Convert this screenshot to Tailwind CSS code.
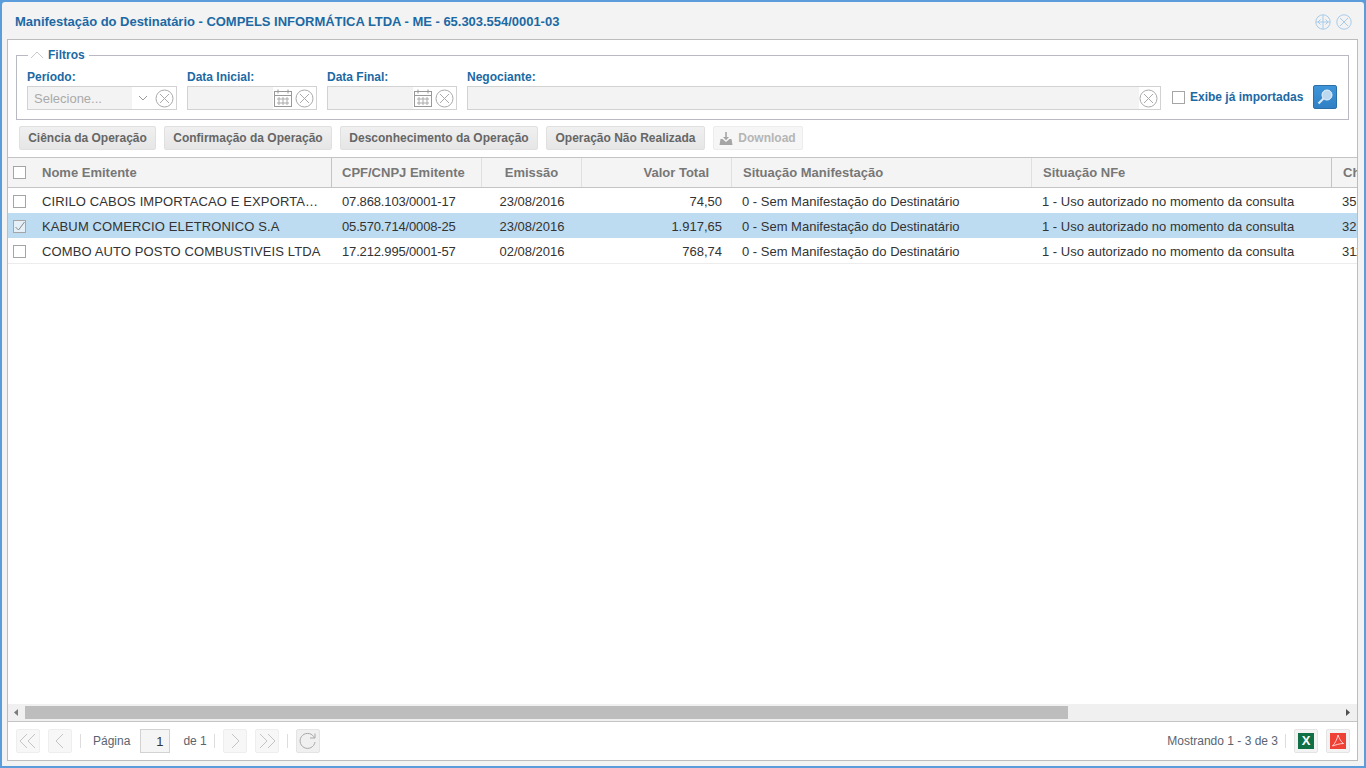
<!DOCTYPE html>
<html lang="pt-BR"><head><meta charset="utf-8"><title>Manifestação do Destinatário</title>
<script src="https://cdn.jsdelivr.net/npm/@tailwindcss/browser@4"></script></head>
<body class="m-0 overflow-hidden bg-[#5b9ddb] font-['Liberation_Sans',Arial,sans-serif]">
<div class="w-[1366px] h-[768px] pt-[2px] pl-[2px] pr-[2px] pb-[2px]">
<div class="h-[764px] bg-[#f3f3f3] rounded-t-[3px] flex flex-col pl-[5px] pr-[6px]">
  <div class="h-[37px] shrink-0 flex items-center justify-between pt-[2px] pl-[8px] pr-[6px]">
    <span class="text-[13px] font-bold text-[#1c69a4] whitespace-nowrap tracking-[-0.025px]">Manifestação do Destinatário - COMPELS INFORMÁTICA LTDA - ME - 65.303.554/0001-03</span>
    <div class="flex gap-[5px] items-center">
      <svg width="16" height="16" viewBox="0 0 16 16" fill="none" stroke="#a9cbe8"><circle cx="8" cy="8" r="7.200"/><path d="M8 1v14M1 8h14M5.500 5.500 3 8l2.500 2.500M10.500 5.500 13 8l-2.500 2.500"/></svg>
      <svg width="16" height="16" viewBox="0 0 16 16" fill="none" stroke="#a9cbe8"><circle cx="8" cy="8" r="7.200"/><path d="m4 4 8 8M12 4l-8 8"/></svg>
    </div>
  </div>
  <div class="h-[722px] bg-white border border-[#bcbcbc] flex flex-col min-h-0">
    <fieldset class="mx-[8px] mt-[8px] h-[72px] shrink-0 border border-[#b9b9c4] px-[10px] pb-0 min-w-0">
      <legend class="ml-[1px] flex items-center gap-[4px] pl-[2px] pr-[4px] h-[14px] text-[12px] font-bold text-[#1c69a4]">
        <svg width="14" height="8" viewBox="0 0 14 8" fill="none" stroke="#c8c8c8"><path d="m1 7 6-6 6 6"/></svg>Filtros
      </legend>
      <div class="flex items-start mt-[8px]">
        <div class="w-[150px] mr-[10px]">
          <div class="h-[16px] text-[12px] font-bold text-[#1c69a4] leading-[14px]">Período:</div>
          <div class="h-[24px] border border-[#d2d2d2] flex items-center bg-white">
            <div class="w-[104px] h-full bg-[#f3f3f3] text-[13px] text-[#aaaaaa] pl-[6px] leading-[23px]">Selecione...</div>
            <svg class="ml-[6px]" width="10" height="6" viewBox="0 0 10 6" fill="none" stroke="#999"><path d="m1 1 4 4 4-4"/></svg>
            <svg class="ml-[7px]" width="19" height="19" viewBox="0 0 19 19" fill="none" stroke="#aaa"><circle cx="9.500" cy="9.500" r="8.500"/><path d="m5 5 9 9M14 5l-9 9"/></svg>
          </div>
        </div>
        <div class="w-[130px] mr-[10px]">
          <div class="h-[16px] text-[12px] font-bold text-[#1c69a4] leading-[14px]">Data Inicial:</div>
          <div class="h-[24px] border border-[#d2d2d2] flex items-center bg-white">
            <div class="w-[85px] h-full bg-[#f3f3f3]"></div>
            <svg class="ml-[1px]" width="18" height="18" viewBox="0 0 18 18" fill="none" stroke="#999"><rect x=".5" y="2.500" width="17" height="15"/><path d="M.5 6.500h17M4 .5v4M14 .5v4"/><path d="M4 9h2v2H4zM8 9h2v2H8zM12 9h2v2h-2zM4 13h2v2H4zM8 13h2v2H8zM12 13h2v2h-2z" stroke="#aaa"/></svg>
            <svg class="ml-[3px]" width="19" height="19" viewBox="0 0 19 19" fill="none" stroke="#aaa"><circle cx="9.500" cy="9.500" r="8.500"/><path d="m5 5 9 9M14 5l-9 9"/></svg>
          </div>
        </div>
        <div class="w-[130px] mr-[10px]">
          <div class="h-[16px] text-[12px] font-bold text-[#1c69a4] leading-[14px]">Data Final:</div>
          <div class="h-[24px] border border-[#d2d2d2] flex items-center bg-white">
            <div class="w-[85px] h-full bg-[#f3f3f3]"></div>
            <svg class="ml-[1px]" width="18" height="18" viewBox="0 0 18 18" fill="none" stroke="#999"><rect x=".5" y="2.500" width="17" height="15"/><path d="M.5 6.500h17M4 .5v4M14 .5v4"/><path d="M4 9h2v2H4zM8 9h2v2H8zM12 9h2v2h-2zM4 13h2v2H4zM8 13h2v2H8zM12 13h2v2h-2z" stroke="#aaa"/></svg>
            <svg class="ml-[3px]" width="19" height="19" viewBox="0 0 19 19" fill="none" stroke="#aaa"><circle cx="9.500" cy="9.500" r="8.500"/><path d="m5 5 9 9M14 5l-9 9"/></svg>
          </div>
        </div>
        <div class="w-[694px]">
          <div class="h-[16px] text-[12px] font-bold text-[#1c69a4] leading-[14px]">Negociante:</div>
          <div class="h-[24px] border border-[#d2d2d2] flex items-center bg-white">
            <div class="w-[671px] h-full bg-[#f3f3f3] shrink-0"></div>
            <svg width="19" height="19" viewBox="0 0 19 19" fill="none" stroke="#aaa"><circle cx="9.500" cy="9.500" r="8.500"/><path d="m5 5 9 9M14 5l-9 9"/></svg>
          </div>
        </div>
        <div class="flex items-center ml-[11px] mt-[15px] h-[24px]">
          <span class="w-[13px] h-[13px] border border-[#a5a5a5] bg-white shrink-0"></span>
          <span class="ml-[5px] text-[12px] font-bold text-[#1c69a4] whitespace-nowrap">Exibe já importadas</span>
          <div class="ml-[10px] w-[24px] h-[24px] rounded-[2px] bg-gradient-to-b from-[#3f95d8] to-[#2f80c4] border border-[#2a6fa8] flex items-center justify-center shrink-0">
            <svg width="18" height="18" viewBox="0 0 18 18" fill="none"><circle cx="11" cy="7" r="5" fill="#bcd9ef" stroke="#e8f2fa"/><path d="M7.500 10.500 2.500 15.500" stroke="#dbe9f4" stroke-width="2.200"/></svg>
          </div>
        </div>
      </div>
    </fieldset>
    <div class="flex gap-[8px] ml-[11px] mt-[6px] h-[24px] shrink-0">
      <button class="w-[137px] rounded-[2px] border border-[#e0e0e0] bg-gradient-to-b from-[#f0f0f0] to-[#e6e6e6] text-[12px] font-bold text-[#666666]">Ciência da Operação</button>
      <button class="w-[168px] rounded-[2px] border border-[#e0e0e0] bg-gradient-to-b from-[#f0f0f0] to-[#e6e6e6] text-[12px] font-bold text-[#666666]">Confirmação da Operação</button>
      <button class="w-[198px] rounded-[2px] border border-[#e0e0e0] bg-gradient-to-b from-[#f0f0f0] to-[#e6e6e6] text-[12px] font-bold text-[#666666]">Desconhecimento da Operação</button>
      <button class="w-[159px] rounded-[2px] border border-[#e0e0e0] bg-gradient-to-b from-[#f0f0f0] to-[#e6e6e6] text-[12px] font-bold text-[#666666]">Operação Não Realizada</button>
      <button class="w-[90px] rounded-[2px] border border-[#ececec] bg-[#f6f6f6] text-[12px] font-bold text-[#b5b5b5] flex items-center justify-center gap-[5px] pr-[1px]">
        <svg width="14" height="13" viewBox="0 0 14 13" fill="#a5a5a5"><path d="M6.200 0h1.600v5h2.200L7 8.200 4 5h2.200zM1.500 7H3.500L7 10l3.500-3h2l1 6H.5z"/></svg>Download
      </button>
    </div>
    <div class="mt-[7px] flex-1 min-h-0 flex flex-col overflow-hidden border-t border-[#c4c4c4]">
      <div class="h-[30px] shrink-0 flex bg-[#f4f4f4] border-b border-[#c4c4c4] text-[13px] font-bold text-[#777777]">
        <div class="w-[25px] flex items-center pl-[5px] shrink-0"><span class="w-[13px] h-[13px] border border-[#a5a5a5] bg-white"></span></div>
        <div class="w-[299px] flex items-center pl-[9px] border-r border-[#c4c4c4] shrink-0">Nome Emitente</div>
        <div class="w-[150px] flex items-center pl-[10px] border-r border-[#e0e0e0] shrink-0">CPF/CNPJ Emitente</div>
        <div class="w-[100px] flex items-center justify-center border-r border-[#e0e0e0] shrink-0">Emissão</div>
        <div class="w-[150px] flex items-center justify-end pr-[22px] border-r border-[#e0e0e0] shrink-0">Valor Total</div>
        <div class="w-[300px] flex items-center pl-[11px] border-r border-[#e0e0e0] shrink-0">Situação Manifestação</div>
        <div class="w-[300px] flex items-center pl-[11px] border-r border-[#c4c4c4] shrink-0">Situação NFe</div>
        <div class="flex-1 flex items-center pl-[11px] overflow-hidden whitespace-nowrap">Chave</div>
      </div>
      <div class="flex-1 min-h-0 text-[13px] text-[#333333]">
        <div class="h-[25px] flex items-center pt-[2px]">
          <div class="w-[25px] pl-[5px] shrink-0 flex mb-[1px]"><span class="w-[13px] h-[13px] border border-[#a5a5a5] bg-white"></span></div>
          <div class="w-[299px] pl-[9px] pr-[13px] shrink-0 truncate tracking-[0.12px]">CIRILO CABOS IMPORTACAO E EXPORTACAO LTDA</div>
          <div class="w-[150px] pl-[10px] shrink-0 tracking-[-0.15px]">07.868.103/0001-17</div>
          <div class="w-[100px] text-center shrink-0">23/08/2016</div>
          <div class="w-[150px] text-right pr-[10px] shrink-0">74,50</div>
          <div class="w-[300px] pl-[10px] shrink-0">0 - Sem Manifestação do Destinatário</div>
          <div class="w-[300px] pl-[10px] shrink-0">1 - Uso autorizado no momento da consulta</div>
          <div class="flex-1 pl-[10px] overflow-hidden whitespace-nowrap">35160807868103000117</div>
        </div>
        <div class="h-[25px] flex items-center bg-[#bddcf1] pt-[2px]">
          <div class="w-[25px] pl-[5px] shrink-0 flex mb-[1px]"><span class="w-[13px] h-[13px] border border-[#a5a5a5] bg-[#e4eff7] flex items-center justify-center"><svg width="11" height="11" viewBox="0 0 11 11" fill="none" stroke="#8a8a8a"><path d="m1.500 6 3 3 6-8"/></svg></span></div>
          <div class="w-[299px] pl-[9px] shrink-0 truncate tracking-[0.12px]">KABUM COMERCIO ELETRONICO S.A</div>
          <div class="w-[150px] pl-[10px] shrink-0 tracking-[-0.15px]">05.570.714/0008-25</div>
          <div class="w-[100px] text-center shrink-0">23/08/2016</div>
          <div class="w-[150px] text-right pr-[10px] shrink-0">1.917,65</div>
          <div class="w-[300px] pl-[10px] shrink-0">0 - Sem Manifestação do Destinatário</div>
          <div class="w-[300px] pl-[10px] shrink-0">1 - Uso autorizado no momento da consulta</div>
          <div class="flex-1 pl-[10px] overflow-hidden whitespace-nowrap">32160805570714000825</div>
        </div>
        <div class="h-[26px] flex items-center border-b border-[#ececec] pt-[2px]">
          <div class="w-[25px] pl-[5px] shrink-0 flex mb-[1px]"><span class="w-[13px] h-[13px] border border-[#a5a5a5] bg-white"></span></div>
          <div class="w-[299px] pl-[9px] shrink-0 truncate tracking-[0.12px]">COMBO AUTO POSTO COMBUSTIVEIS LTDA</div>
          <div class="w-[150px] pl-[10px] shrink-0 tracking-[-0.15px]">17.212.995/0001-57</div>
          <div class="w-[100px] text-center shrink-0">02/08/2016</div>
          <div class="w-[150px] text-right pr-[10px] shrink-0">768,74</div>
          <div class="w-[300px] pl-[10px] shrink-0">0 - Sem Manifestação do Destinatário</div>
          <div class="w-[300px] pl-[10px] shrink-0">1 - Uso autorizado no momento da consulta</div>
          <div class="flex-1 pl-[10px] overflow-hidden whitespace-nowrap">31160817212995000157</div>
        </div>
      </div>
      <div class="h-[17px] shrink-0 bg-[#f0f0f0] flex items-center">
        <div class="w-[17px] flex justify-center shrink-0"><svg width="5" height="7" viewBox="0 0 5 7" fill="#7c7c7c"><path d="M4 0v7L0 3.500z"/></svg></div>
        <div class="w-[1043px] h-[13px] bg-[#bdbdbd] shrink-0"></div>
        <div class="flex-1 flex justify-end pr-[6px]"><svg width="5" height="7" viewBox="0 0 5 7" fill="#505050"><path d="M0 0v7l4-3.500z"/></svg></div>
      </div>
      <div class="h-[39px] shrink-0 bg-white border-t border-[#c4c4c4] flex items-center pl-[8px] pr-[7px] text-[12px] text-[#5a6470]">
        <div class="w-[24px] h-[24px] rounded-[2px] border border-[#eeeeee] bg-[#f7f7f7] flex items-center justify-center"><svg width="20" height="16" viewBox="0 0 20 16" fill="none" stroke="#c4c4c4"><path d="M9 1 2 8l7 7M17 1l-7 7 7 7"/></svg></div>
        <div class="ml-[8px] w-[24px] h-[24px] rounded-[2px] border border-[#eeeeee] bg-[#f7f7f7] flex items-center justify-center"><svg width="10" height="16" viewBox="0 0 10 16" fill="none" stroke="#c4c4c4"><path d="M8 1 1 8l7 7"/></svg></div>
        <div class="ml-[8px] h-[14px] w-px bg-[#dddddd]"></div>
        <span class="ml-[12px]">Página</span>
        <div class="ml-[10px] w-[30px] h-[24px] bg-[#f5f5f5] border border-[#d2d2d2] text-right pr-[6px] leading-[24px] text-[#333] text-[13px]">1</div>
        <span class="ml-[13px]">de 1</span>
        <div class="ml-[7px] h-[14px] w-px bg-[#dddddd]"></div>
        <div class="ml-[8px] w-[24px] h-[24px] rounded-[2px] border border-[#eeeeee] bg-[#f7f7f7] flex items-center justify-center"><svg width="10" height="16" viewBox="0 0 10 16" fill="none" stroke="#c4c4c4"><path d="m2 1 7 7-7 7"/></svg></div>
        <div class="ml-[8px] w-[24px] h-[24px] rounded-[2px] border border-[#eeeeee] bg-[#f7f7f7] flex items-center justify-center"><svg width="20" height="16" viewBox="0 0 20 16" fill="none" stroke="#c4c4c4"><path d="m3 1 7 7-7 7M11 1l7 7-7 7"/></svg></div>
        <div class="ml-[8px] h-[14px] w-px bg-[#dddddd]"></div>
        <div class="ml-[8px] w-[24px] h-[24px] rounded-[2px] border border-[#e4e4e4] bg-[#f0f0f0] flex items-center justify-center"><svg width="18" height="18" viewBox="0 0 18 18" fill="none" stroke="#a8a8a8"><path d="M15.500 6A7.500 7.500 0 1 0 16 10M16 1.500V6h-5"/></svg></div>
        <span class="ml-auto">Mostrando 1 - 3 de 3</span>
        <div class="ml-[7px] h-[14px] w-px bg-[#dddddd]"></div>
        <div class="ml-[8px] w-[24px] h-[24px] rounded-[2px] border border-[#e4e4e4] bg-[#f3f3f3] flex items-center justify-center"><div class="w-[16px] h-[16px] bg-[#0f7045] text-white font-bold text-[13px] leading-[16px] text-center">X</div></div>
        <div class="ml-[8px] w-[24px] h-[24px] rounded-[2px] border border-[#e4e4e4] bg-[#f3f3f3] flex items-center justify-center"><div class="w-[16px] h-[16px] bg-[#ef4136] flex items-center justify-center"><svg width="14" height="14" viewBox="0 0 14 14" fill="none" stroke="#ffffff" stroke-opacity=".75"><path d="M7 1c-.5 3-2.500 8-5.500 11 3-1 7-2.500 11-2.500C10 8 8 4 7 1z"/></svg></div></div>
      </div>
    </div>
  </div>
</div>
</div>
</body></html>
